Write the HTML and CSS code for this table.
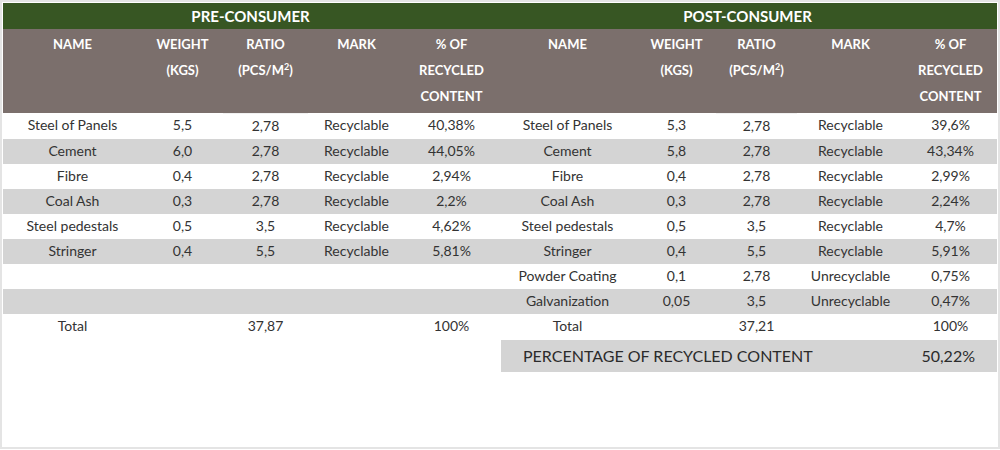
FILE: index.html
```html
<!DOCTYPE html>
<html>
<head>
<meta charset="utf-8">
<link rel="stylesheet" href="styles.css">
</head>
<body>
<div class="frame">
  <div class="half left">
    <table class="tbl">
      <colgroup><col style="width:139px"><col style="width:81px"><col style="width:85px"><col style="width:97px"><col style="width:93px"></colgroup>
      <thead>
        <tr><th class="title" colspan="5">PRE-CONSUMER</th></tr>
        <tr class="cols">
          <th>NAME</th><th>WEIGHT<br>(KGS)</th><th class="ratio">RATIO<br>(PCS/M<sup>2</sup>)</th><th>MARK</th><th>% OF<br>RECYCLED<br>CONTENT</th>
        </tr>
      </thead>
      <tbody>
        <tr><td>Steel of Panels</td><td>5,5</td><td>2,78</td><td>Recyclable</td><td>40,38%</td></tr>
        <tr class="alt"><td>Cement</td><td>6,0</td><td>2,78</td><td>Recyclable</td><td>44,05%</td></tr>
        <tr><td>Fibre</td><td>0,4</td><td>2,78</td><td>Recyclable</td><td>2,94%</td></tr>
        <tr class="alt"><td>Coal Ash</td><td>0,3</td><td>2,78</td><td>Recyclable</td><td>2,2%</td></tr>
        <tr><td>Steel pedestals</td><td>0,5</td><td>3,5</td><td>Recyclable</td><td>4,62%</td></tr>
        <tr class="alt"><td>Stringer</td><td>0,4</td><td>5,5</td><td>Recyclable</td><td>5,81%</td></tr>
        <tr><td></td><td></td><td></td><td></td><td></td></tr>
        <tr class="alt"><td></td><td></td><td></td><td></td><td></td></tr>
        <tr><td>Total</td><td></td><td>37,87</td><td></td><td>100%</td></tr>
      </tbody>
    </table>
  </div>
  <div class="half right">
    <table class="tbl">
      <colgroup><col style="width:139px"><col style="width:79px"><col style="width:81px"><col style="width:107px"><col style="width:93px"></colgroup>
      <thead>
        <tr><th class="title" colspan="5">POST-CONSUMER</th></tr>
        <tr class="cols">
          <th>NAME</th><th>WEIGHT<br>(KGS)</th><th class="ratio">RATIO<br>(PCS/M<sup>2</sup>)</th><th>MARK</th><th>% OF<br>RECYCLED<br>CONTENT</th>
        </tr>
      </thead>
      <tbody>
        <tr><td>Steel of Panels</td><td>5,3</td><td>2,78</td><td>Recyclable</td><td>39,6%</td></tr>
        <tr class="alt"><td>Cement</td><td>5,8</td><td>2,78</td><td>Recyclable</td><td>43,34%</td></tr>
        <tr><td>Fibre</td><td>0,4</td><td>2,78</td><td>Recyclable</td><td>2,99%</td></tr>
        <tr class="alt"><td>Coal Ash</td><td>0,3</td><td>2,78</td><td>Recyclable</td><td>2,24%</td></tr>
        <tr><td>Steel pedestals</td><td>0,5</td><td>3,5</td><td>Recyclable</td><td>4,7%</td></tr>
        <tr class="alt"><td>Stringer</td><td>0,4</td><td>5,5</td><td>Recyclable</td><td>5,91%</td></tr>
        <tr><td>Powder Coating</td><td>0,1</td><td>2,78</td><td>Unrecyclable</td><td>0,75%</td></tr>
        <tr class="alt"><td>Galvanization</td><td>0,05</td><td>3,5</td><td>Unrecyclable</td><td>0,47%</td></tr>
        <tr><td>Total</td><td></td><td>37,21</td><td></td><td>100%</td></tr>
      </tbody>
    </table>
    <div class="summary">
      <span>PERCENTAGE OF RECYCLED CONTENT</span>
      <span>50,22%</span>
    </div>
  </div>
</div>
</body>
</html>
```
FILE: styles.css
```css
html, body {
  margin: 0;
  padding: 0;
  background: #ffffff;
}
.frame {
  box-sizing: border-box;
  width: 1000px;
  height: 449px;
  border: 2px solid #e4e4e4;
  padding: 1px;
  display: flex;
  font-family: Lato, "Open Sans", sans-serif;
  color: #333333;
}
.half.left { width: 495px; }
.half.right { width: 499px; }
.tbl {
  border-collapse: collapse;
  table-layout: fixed;
  width: 100%;
}
.tbl th, .tbl td {
  padding: 0;
  text-align: center;
}
.tbl .title {
  background: #375623;
  color: #ffffff;
  font-size: 15px;
  font-weight: 700;
  height: 26px;
  line-height: 26px;
}
.cols th {
  background: #7b6f6c;
  color: #ffffff;
  font-size: 13px;
  font-weight: 700;
  line-height: 26px;
  vertical-align: top;
  padding: 2px 0 4px;
  height: 77px;
}
.cols th.ratio {
  border-bottom: 1px solid #f1f1f1;
}
.cols sup {
  font-size: 9px;
  line-height: 0;
  vertical-align: 5px;
}
.tbl td {
  font-size: 14px;
  height: 24px;
  line-height: 24px;
  padding-bottom: 1px;
  white-space: nowrap;
}
.tbl tr.alt td {
  background: #d4d4d4;
}
.summary {
  margin: 1px 0 0 3px;
  height: 32px;
  background: #d4d4d4;
  display: flex;
  align-items: center;
  justify-content: space-between;
  padding: 0 22px;
  font-size: 16px;
  color: #2b2b2b;
}
```
